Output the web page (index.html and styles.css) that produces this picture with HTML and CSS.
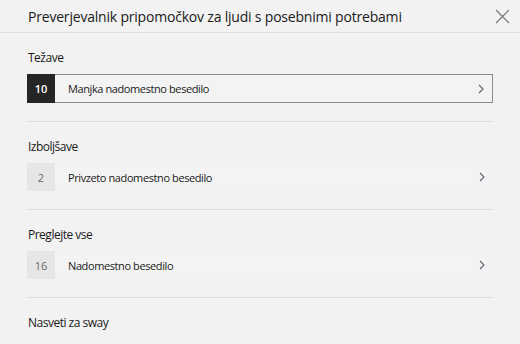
FILE: index.html
```html
<!DOCTYPE html>
<html lang="sl">
<head>
    <meta charset="UTF-8">
    <title>Preverjevalnik pripomočkov</title>
    <link rel="stylesheet" href="styles.css">
</head>
<body>
    <div class="pane">
        <!-- Header -->
        <div class="header">
            <span class="title">Preverjevalnik pripomočkov za ljudi s posebnimi potrebami</span>
            <svg class="close" width="15" height="15" viewBox="0 0 15 15">
                <path d="M1 1 L14 14 M14 1 L1 14" stroke="#7a7a7a" stroke-width="1.2" fill="none"/>
            </svg>
        </div>

        <div class="content">
            <div class="section">
                <div class="heading">Težave</div>
                <div class="row row-active">
                    <span class="badge badge-dark">10</span>
                    <span class="label">Manjka nadomestno besedilo</span>
                    <svg class="chevron" width="6" height="10" viewBox="0 0 6 10"><path d="M1 1 L5 5 L1 9" stroke="#5a6470" stroke-width="1.1" fill="none"/></svg>
                </div>
            </div>

            <div class="section">
                <div class="heading">Izboljšave</div>
                <div class="row">
                    <span class="badge">2</span>
                    <span class="label">Privzeto nadomestno besedilo</span>
                    <svg class="chevron" width="6" height="10" viewBox="0 0 6 10"><path d="M1 1 L5 5 L1 9" stroke="#5a6470" stroke-width="1.1" fill="none"/></svg>
                </div>
            </div>

            <div class="section">
                <div class="heading">Preglejte vse</div>
                <div class="row">
                    <span class="badge">16</span>
                    <span class="label">Nadomestno besedilo</span>
                    <svg class="chevron" width="6" height="10" viewBox="0 0 6 10"><path d="M1 1 L5 5 L1 9" stroke="#5a6470" stroke-width="1.1" fill="none"/></svg>
                </div>
            </div>

            <div class="section section-last">
                <div class="heading">Nasveti za sway</div>
            </div>
        </div>
    </div>
</body>
</html>
```

FILE: styles.css
```css
* {
    margin: 0;
    padding: 0;
    box-sizing: border-box;
}

body {
    background: #f2f2f2;
    color: #1a1a1a;
    font-family: "Open Sans", "Noto Sans", sans-serif;
    width: 520px;
    height: 344px;
    overflow: hidden;
}

.header {
    height: 33px;
    display: flex;
    align-items: center;
    justify-content: space-between;
    padding: 0 10px 0 28px;
    border-bottom: 1px solid #e0e0e0;
}

.title {
    font-size: 14px;
    letter-spacing: -0.2px;
    color: #1a1a1a;
    margin-top: 1px;
}

.close {
    margin-top: 1px;
}

.content {
    padding: 0 27px;
}

.section {
    padding: 16px 0 18px;
    border-bottom: 1px solid #dcdcdc;
}

.section-last {
    border-bottom: none;
}

.heading {
    font-size: 12px;
    line-height: 18px;
    letter-spacing: -0.5px;
    margin-bottom: 7px;
    padding-left: 1px;
}

.row {
    display: flex;
    align-items: center;
    height: 28px;
    background: #f3f3f3;
}

.row-active {
    height: 29px;
    border: 1px solid #8c8c8c;
    border-left: none;
}

.badge {
    width: 28px;
    height: 28px;
    display: flex;
    align-items: center;
    justify-content: center;
    background: #e6e6e6;
    color: #6a6a6a;
    font-size: 11px;
}

.badge-dark {
    background: #252525;
    color: #fff;
    height: 29px;
    margin: -1px 0;
    font-weight: 600;
}

.label {
    flex: 1;
    margin-left: 13px;
    font-size: 11px;
    letter-spacing: -0.4px;
}

.chevron {
    margin-right: 8px;
}
```
